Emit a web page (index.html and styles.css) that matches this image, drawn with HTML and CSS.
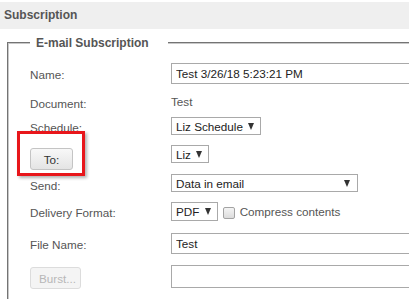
FILE: index.html
```html
<!DOCTYPE html>
<html lang="en">
<head>
    <meta charset="UTF-8">
    <title>Subscription</title>
    <link rel="stylesheet" href="styles.css">
</head>
<body>
<div class="panel-head">Subscription</div>

<fieldset class="group">
    <legend class="group-title">E-mail Subscription</legend>

    <div class="row row-name">
        <label class="lbl">Name:</label>
        <input class="text" type="text" value="Test 3/26/18 5:23:21 PM">
    </div>

    <div class="row row-doc">
        <span class="lbl">Document:</span>
        <span class="value">Test</span>
    </div>

    <div class="row row-sched">
        <span class="lbl">Schedule:</span>
        <span class="select">Liz Schedule <i class="caret"></i></span>
    </div>

    <div class="row row-to">
        <span class="lbl">
            <span class="callout"><button class="btn">To:</button></span>
        </span>
        <span class="select">Liz <i class="caret"></i></span>
    </div>

    <div class="row row-send">
        <span class="lbl">Send:</span>
        <span class="select select-wide">Data in email <i class="caret"></i></span>
    </div>

    <div class="row row-format">
        <span class="lbl">Delivery Format:</span>
        <span class="select">PDF <i class="caret"></i></span>
        <span class="check"></span>
        <span class="check-text">Compress contents</span>
    </div>

    <div class="row row-file">
        <label class="lbl">File Name:</label>
        <input class="text" type="text" value="Test">
    </div>

    <div class="row row-burst">
        <span class="lbl"><button class="btn btn-off" disabled>Burst...</button></span>
        <input class="text text-burst" type="text" value="">
    </div>
</fieldset>
</body>
</html>
```

FILE: styles.css
```css
body{
    margin: 0;
    width: 409px;
    height: 299px;
    overflow: hidden;
    background: #fff;
    font-family: "Liberation Sans", Arial, sans-serif;
    font-size: 11.7px;
    color: #555;
}

.panel-head{
    margin-top: 2px;
    height: 27px;
    line-height: 27px;
    padding-left: 4px;
    background: #efefef;
    font-size: 12px;
    font-weight: bold;
    color: #555;
}

/* the group runs off the right edge, so no right border */
.group{
    margin: 6px 0 0 7px;
    padding: 12px 0 20px 21px;
    border: 2px groove #c8c8c8;
    border-right: 0;
}
.group-title{
    padding: 0 19px 0 6px;
    line-height: 16px;
    font-size: 12px;
    font-weight: bold;
    color: #555;
}

/* each row: label column + control column */
.row{
    display: flex;
    align-items: flex-start;
}
.row-name  { height: 30px; }
.row-doc   { height: 24px; }
.row-sched { height: 28px; }
.row-to    { height: 29px; }
.row-send  { height: 28px; }
.row-format{ height: 31px; }
.row-file  { height: 32px; }
.row-burst { height: 24px; }

.lbl{
    flex: 0 0 141px;
    padding-top: 3px;
    line-height: 16px;
}
.row-name .lbl{ padding-top: 4px; }
.row-send .lbl{ padding-top: 4px; }
.row-file .lbl{ padding-top: 4px; }
.row-to .lbl,
.row-burst .lbl{ padding-top: 0; }

.value{
    line-height: 16px;
    padding-top: 1px;
}

.text{
    box-sizing: border-box;
    flex: 1;
    min-width: 0;
    height: 21px;
    margin: 0;
    padding: 0 4px;
    border: 1px solid #a9a9a9;
    border-right: 0;
    font-family: inherit;
    font-size: 11.7px;
    color: #222;
    outline: none;
}
.text-burst{ height: 23px; }

.select{
    display: inline-flex;
    align-items: center;
    box-sizing: border-box;
    height: 18px;
    padding: 0 6px 0 4px;
    border: 1px solid #a9a9a9;
    color: #222;
    white-space: pre;
}
.row-format .select{ height: 19px; }
.select-wide{
    width: 187px;
    justify-content: space-between;
    padding-right: 7px;
}
.caret{
    width: 0;
    height: 0;
    margin-left: 2px;
    border-left: 3.5px solid transparent;
    border-right: 3.5px solid transparent;
    border-top: 7px solid #333;
}

.check{
    box-sizing: border-box;
    width: 12px;
    height: 12px;
    margin: 5px 5px 0 5px;
    border: 1px solid #a3a3a3;
    border-radius: 2px;
    background: linear-gradient(#f4f4f4, #dcdcdc);
}
.check-text{
    line-height: 16px;
    padding-top: 2px;
}

.btn{
    box-sizing: border-box;
    height: 22px;
    padding: 0 8px;
    border: 1px solid #c4c4c4;
    border-radius: 3px;
    background: linear-gradient(#f8f8f8, #e4e4e4);
    font-family: inherit;
    font-size: 11.7px;
    color: #333;
}
.row-to .btn{ width: 43px; margin-top: 3px; }
.row-burst .btn{ width: 51px; margin-top: 2px; }
.btn-off{
    border-color: #dcdcdc;
    background: #f4f4f4;
    color: #b8b8b8;
}

/* red highlight drawn over the To: button */
.callout{
    position: relative;
    display: inline-block;
}
.callout::after{
    content: "";
    position: absolute;
    left: -13px;
    right: -12px;
    top: -14px;
    bottom: -6px;
    border: 3px solid #e8161b;
    box-shadow: 2px 2px 3px rgba(0,0,0,.3);
    pointer-events: none;
}
```
